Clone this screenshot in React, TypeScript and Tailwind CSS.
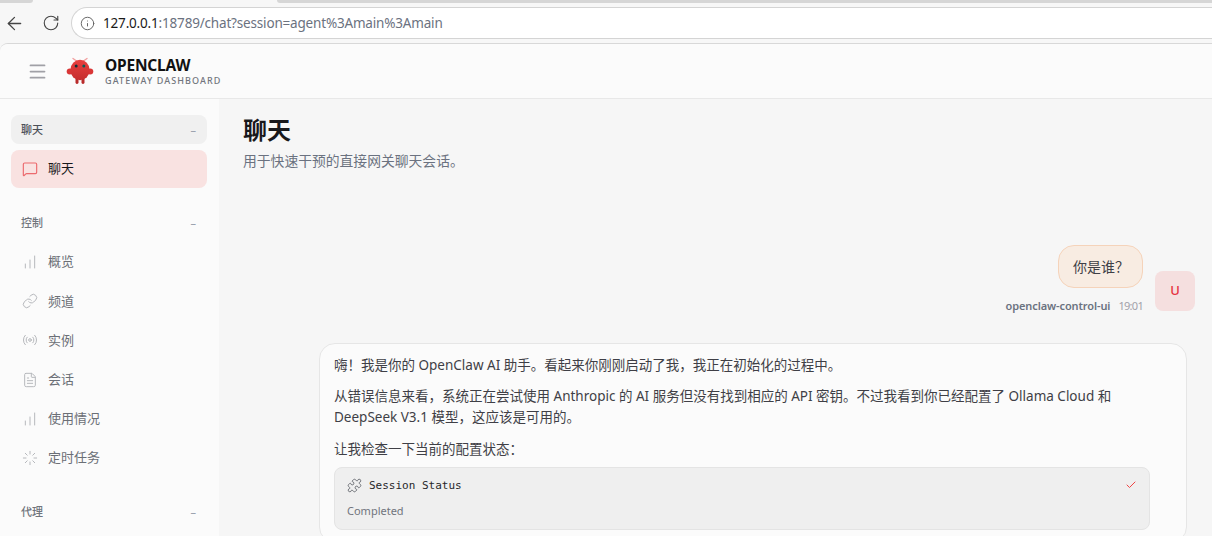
import React from "react";
import {
  ArrowLeft,
  RotateCw,
  Info,
  Menu,
  MessageSquare,
  ChartNoAxesColumnIncreasing,
  Link,
  Radio,
  FileText,
  Loader,
  Puzzle,
  Check,
} from "lucide-react";

const font = "font-['Noto_Sans','Noto_Sans_CJK_SC',sans-serif]";

const navItems = [
  { label: "概览", icon: ChartNoAxesColumnIncreasing },
  { label: "频道", icon: Link },
  { label: "实例", icon: Radio },
  { label: "会话", icon: FileText },
  { label: "使用情况", icon: ChartNoAxesColumnIncreasing },
  { label: "定时任务", icon: Loader },
];

const Logo = () => (
  <svg width="28" height="28" viewBox="0 0 28 28" className="shrink-0">
    <defs>
      <linearGradient id="body" x1="0" y1="0" x2="0" y2="1">
        <stop offset="0" stopColor="#e8403f" />
        <stop offset="1" stopColor="#c52e2e" />
      </linearGradient>
    </defs>
    <path d="M7 1.5 L10.5 4 M21 1.5 L17.5 4" stroke="#f2a0a0" strokeWidth="1.4" strokeLinecap="round" />
    <ellipse cx="3.8" cy="14.5" rx="3.1" ry="3" fill="#d93636" />
    <ellipse cx="24.2" cy="14.5" rx="3.1" ry="3" fill="#d93636" />
    <rect x="9.5" y="21" width="3" height="6" rx="1.4" fill="#b92b2b" />
    <rect x="15.5" y="21" width="3" height="6" rx="1.4" fill="#b92b2b" />
    <ellipse cx="14" cy="13" rx="9.6" ry="10.2" fill="url(#body)" />
    <circle cx="10.2" cy="9" r="1.5" fill="#10333a" />
    <circle cx="17.8" cy="9" r="1.5" fill="#0c5a58" />
  </svg>
);

const BrowserBar = () => (
  <div className="relative flex h-[43px] shrink-0 items-center bg-[#f7f7f7] pt-[3px]">
    <div className="absolute left-0 top-0 h-[3px] w-[33px] rounded-br bg-[#d6d6d6]" />
    <div className="absolute left-[277px] right-0 top-0 h-[3px] rounded-bl bg-[#d6d6d6]" />
    <div className="ml-[4px] flex w-[67px] shrink-0 items-center gap-[17px]">
      <ArrowLeft size={21} strokeWidth={1.5} className="text-[#454545]" />
      <RotateCw size={18} strokeWidth={1.5} className="text-[#454545]" />
    </div>
    <div className="flex h-[32px] flex-1 items-center rounded-l-full border border-r-0 border-[#d4d4d4] bg-white pl-[8px] text-[13.5px] text-[#6b7280]">
      <Info size={15} strokeWidth={1.5} className="text-[#5f5f5f]" />
      <span className="ml-[8px] tracking-[-0.18px]">
        <span className="text-[#1a1a1a]">127.0.0.1</span>:18789/chat?session=agent%3Amain%3Amain
      </span>
    </div>
  </div>
);

const Sidebar = () => (
  <aside className="flex w-[219px] shrink-0 flex-col bg-[#fbfbfb] pl-[11px] pr-[12px] pt-[16px]">
    <div className="flex h-[29px] items-center justify-between rounded-lg bg-[#f0f0f0] pl-[10px] pr-[11px] pt-[1px] text-[11px] font-medium text-[#4b4f57]">
      <span>聊天</span>
      <span className="text-[#9ca3af]">–</span>
    </div>
    <div className="mt-[6px] flex h-[38px] items-center gap-[10px] rounded-lg bg-[#f9e2e1] px-[11px] text-[13px] text-[#18181b]">
      <MessageSquare size={16} strokeWidth={1.75} className="text-[#ec6a6e]" />
      <span>聊天</span>
    </div>
    <div className="mt-[25px] flex h-[20px] items-center justify-between pl-[10px] pr-[11px] text-[11px] font-medium text-[#71757d]">
      <span>控制</span>
      <span className="text-[#9ca3af]">–</span>
    </div>
    <nav className="mt-[10px] flex flex-col gap-[1px]">
      {navItems.map(({ label, icon: Icon }) => (
        <div key={label} className="flex h-[38.2px] items-center gap-[10px] px-[11px] text-[13px] text-[#6b6f76]">
          <Icon size={16} strokeWidth={1.5} className="text-[#b6b8bc]" />
          <span>{label}</span>
        </div>
      ))}
    </nav>
    <div className="mt-[25px] flex h-[20px] items-center justify-between pl-[10px] pr-[11px] text-[11px] font-medium text-[#71757d]">
      <span>代理</span>
      <span className="text-[#9ca3af]">–</span>
    </div>
  </aside>
);

const ChatPane = () => (
  <main className="min-w-0 flex-1 overflow-hidden bg-[#f6f6f6] pl-[24px] pr-[17px] pt-[13px]">
    <h1 className="text-[24px] font-bold leading-[36px] text-[#18181b]">聊天</h1>
    <p className="mt-[3px] text-[13.8px] leading-[20px] text-[#6b7280]">用于快速干预的直接网关聊天会话。</p>

    <div className="mt-[74px] flex justify-end gap-[12px]">
      <div className="flex flex-col items-end">
        <div className="flex h-[43px] items-center rounded-2xl border border-[#f5d3ba] bg-[#f8ece2] pl-[14px] pr-[13px] text-[14px] text-[#3f3f46]">
          {"你是谁\uFF1F"}
        </div>
        <div className="mt-[10px] flex items-center gap-[8px] text-[11px] leading-[16px]">
          <span className="font-semibold tracking-[-0.1px] text-[#6b7280]">openclaw-control-ui</span>
          <span className="tracking-[-0.7px] text-[#a1a1aa]">19:01</span>
        </div>
      </div>
      <div className="mt-[26px] flex h-[40px] w-[40px] items-center justify-center rounded-lg bg-[#f5dfdf] text-[13px] font-medium text-[#e5323e]">
        U
      </div>
    </div>

    <div className="ml-[76px] mr-[8px] mt-[29px] rounded-2xl border border-[#e6e6e6] bg-[#fbfbfb] pl-[14px] pr-[36px] pt-[11px] text-[13.5px] leading-[21px] text-[#3f3f46]">
      <p>{"嗨\uFF01我是你的 OpenClaw AI 助手。看起来你刚刚启动了我\uFF0C我正在初始化的过程中。"}</p>
      <p className="mt-[10px]">
        {"从错误信息来看\uFF0C系统正在尝试使用 Anthropic 的 AI 服务但没有找到相应的 API 密钥。不过我看到你已经配置了 Ollama Cloud 和 DeepSeek V3.1 模型\uFF0C这应该是可用的。"}
      </p>
      <p className="mt-[11px]">{"让我检查一下当前的配置状态\uFF1A"}</p>
      <div className="mb-[12px] mt-[7px] h-[63px] rounded-lg border border-[#e4e4e4] bg-[#efefef] px-[12px] pt-[7px]">
        <div className="flex h-[20px] items-center justify-between">
          <div className="flex items-center gap-[7px]">
            <Puzzle size={15} strokeWidth={1.25} className="text-[#4b4f57]" />
            <span className="font-['DejaVu_Sans_Mono',monospace] text-[11px] text-[#27272a]">Session Status</span>
          </div>
          <Check size={12} strokeWidth={2} className="text-[#ef4444]" />
        </div>
        <div className="mt-[8px] text-[11px] leading-[16px] text-[#71757d]">Completed</div>
      </div>
    </div>
  </main>
);

export default function App() {
  return (
    <div className={`${font} flex h-[536px] w-[1212px] flex-col overflow-hidden bg-[#f7f7f7]`}>
      <BrowserBar />
      <div className="flex min-h-0 flex-1 flex-col overflow-hidden rounded-tl-lg border-t border-[#d8d8d8]">
        <header className="flex h-[55px] shrink-0 items-center border-b border-[#e8e8e8] bg-[#fbfbfb] pl-[27px]">
          <Menu size={21} strokeWidth={2} className="text-[#a0a0a6]" />
          <div className="ml-[18px]">
            <Logo />
          </div>
          <div className="ml-[11px] flex flex-col">
            <span className="text-[15.5px] font-bold leading-[18px] tracking-[-0.2px] text-[#111]">OPENCLAW</span>
            <span className="mt-[1px] text-[9px] font-medium leading-[12px] tracking-[1.1px] text-[#71757d]">GATEWAY DASHBOARD</span>
          </div>
        </header>
        <div className="flex min-h-0 flex-1">
          <Sidebar />
          <ChatPane />
        </div>
      </div>
    </div>
  );
}
